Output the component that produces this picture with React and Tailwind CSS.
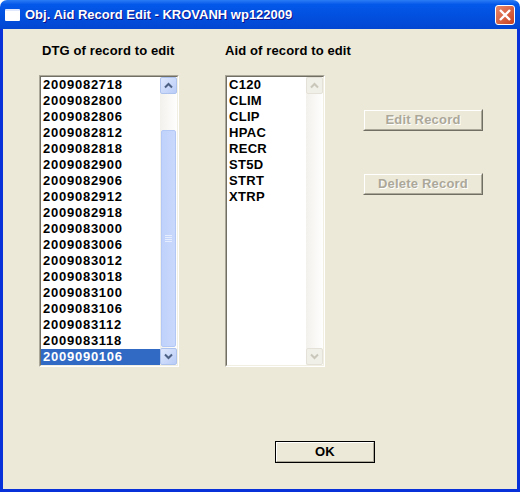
const dtg = ["2009082718","2009082800","2009082806","2009082812","2009082818","2009082900","2009082906","2009082912","2009082918","2009083000","2009083006","2009083012","2009083018","2009083100","2009083106","2009083112","2009083118","2009090106"];
const aids = ["C120","CLIM","CLIP","HPAC","RECR","ST5D","STRT","XTRP"];

function Arrow({ dir, disabled }) {
  return (
    <div className={`w-[17px] h-[17px] shrink-0 rounded-[2px] border flex items-center justify-center ${disabled ? "border-[#e4e2d8] bg-[#f0efe8]" : "border-[#aec2ee] bg-gradient-to-br from-[#dfe8fd] to-[#b9ccf7]"}`}>
      <svg width="9" height="7" viewBox="0 0 9 7" fill="none" stroke={disabled ? "#c9c7ba" : "#4d6185"} strokeWidth="2">
        <path d={dir === "up" ? "M1 5.5 L4.5 2 L8 5.5" : "M1 1.5 L4.5 5 L8 1.5"} />
      </svg>
    </div>
  );
}

function ListBox({ items, selected, w, scroll, track }) {
  return (
    <div className={`border border-t-[#aca899] border-l-[#aca899] border-r-white border-b-white ${w} h-[292px]`}>
      <div className="h-full flex border border-t-[#716f64] border-l-[#716f64] border-r-[#f1efe2] border-b-[#f1efe2] bg-white">
        <div className={`flex-1 min-w-0 ${track}`}>
          {items.map((t) => (
            <div key={t} className={`h-4 pl-[2px] leading-4 ${t === selected ? "bg-[#316ac5] text-white" : "text-black"}`}>{t}</div>
          ))}
        </div>
        <div className="w-[17px] shrink-0 flex flex-col bg-gradient-to-r from-[#f3f1ec] to-[#fefefe]">
          <Arrow dir="up" disabled={!scroll} />
          {scroll ? (
            <div className="flex-1 flex flex-col pt-[36px] pb-px">
              <div className="flex-1 mx-px rounded-[2px] border border-[#b4c8f6] bg-gradient-to-r from-[#c0d2fb] to-[#c9d8fc] flex items-center justify-center">
                <div className="w-[7px] flex flex-col gap-px">
                  <div className="h-px bg-[#e6edfe]" /><div className="h-px bg-[#e6edfe]" /><div className="h-px bg-[#e6edfe]" /><div className="h-px bg-[#e6edfe]" />
                </div>
              </div>
            </div>
          ) : <div className="flex-1" />}
          <Arrow dir="down" disabled={!scroll} />
        </div>
      </div>
    </div>
  );
}

function Btn({ children, disabled, def, cls }) {
  return (
    <div className={`h-[22px] bg-[#ece9d8] ${def ? "border border-black" : "border border-transparent border-r-[#716f64] border-b-[#716f64]"} ${cls}`}>
      <div className={`w-full h-full flex items-center justify-center tracking-[0.2px] border border-t-white border-l-white border-r-[#aca899] border-b-[#aca899] ${disabled ? "text-[#aca899] [text-shadow:1px_1px_0_#fff]" : "text-black"}`}>
        {children}
      </div>
    </div>
  );
}

export default function App() {
  return (
    <div className="w-[520px] h-[492px] flex flex-col bg-white overflow-hidden font-['Liberation_Sans',sans-serif] font-bold text-[13px]">
      <div className="h-[29px] shrink-0 rounded-t-[7px] flex items-center pl-[5px] pr-[5px] bg-gradient-to-b from-[#2a7cf5] via-[#0358ea] via-[15%] to-[#0246d2]">
        <div className="w-[15px] h-[12px] bg-white rounded-[1px] border-t-[2px] border-[#dfe8fd] shrink-0" />
        <div className="ml-[5px] flex-1 text-white text-[13px] leading-none [text-shadow:1px_1px_0_#0f1089]">Obj. Aid Record Edit - KROVANH wp122009</div>
        <div className="w-[20px] h-[20px] rounded-[3px] border border-white bg-gradient-to-br from-[#e8886a] to-[#c8401c] flex items-center justify-center">
          <svg width="12" height="12" viewBox="0 0 12 12" stroke="white" strokeWidth="2.4"><path d="M1 1 L11 11 M11 1 L1 11" /></svg>
        </div>
      </div>
      <div className="flex-1 border-x-[3px] border-b-[3px] border-[#0831d9] bg-[#ece9d8] flex flex-col pl-[36px]">
        <div className="flex pt-[14px]">
          <div className="w-[186px]">
            <div className="h-4 leading-4 pl-[3px] mb-[16px] text-black tracking-[0.12px] whitespace-nowrap">DTG of record to edit</div>
            <ListBox items={dtg} selected="2009090106" w="w-[140px]" scroll track="tracking-[0.75px]" />
          </div>
          <div className="w-[138px]">
            <div className="h-4 leading-4 mb-[16px] text-black tracking-[0.12px] whitespace-nowrap">Aid of record to edit</div>
            <ListBox items={aids} w="w-[100px]" track="tracking-[0.3px]" />
          </div>
          <div className="w-[120px] pt-[66px] flex flex-col gap-[42px]">
            <Btn disabled cls="w-[120px]">Edit Record</Btn>
            <Btn disabled cls="w-[120px]">Delete Record</Btn>
          </div>
        </div>
        <div className="mt-[74px] ml-[236px]">
          <Btn def cls="w-[100px]">OK</Btn>
        </div>
      </div>
    </div>
  );
}
